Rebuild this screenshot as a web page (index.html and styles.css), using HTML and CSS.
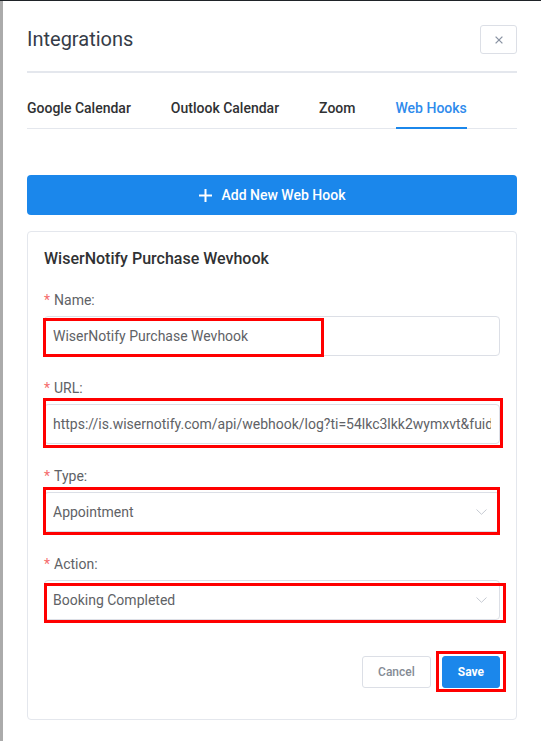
FILE: index.html
```html
<!DOCTYPE html>
<html lang="en">
<head>
<meta charset="utf-8">
<title>Integrations</title>
<link rel="stylesheet" href="styles.css">
</head>
<body>
<div class="topline"></div>
<div class="screen">
  <div class="backdrop"></div>
  <div class="drawer">
    <header class="drawer-header">
      <h1 class="title">Integrations</h1>
      <button class="close-btn" aria-label="Close">
        <svg width="8" height="8" viewBox="0 0 8 8"><path d="M0.6 0.6L7.4 7.4M7.4 0.6L0.6 7.4" stroke="#8a93a3" stroke-width="1.3" fill="none"/></svg>
      </button>
    </header>

    <nav class="tabs">
      <div class="tab">Google Calendar</div>
      <div class="tab">Outlook Calendar</div>
      <div class="tab">Zoom</div>
      <div class="tab active">Web Hooks</div>
    </nav>

    <button class="add-btn">
      <svg width="13" height="13" viewBox="0 0 13 13"><path d="M6.5 0V13M0 6.5H13" stroke="#fff" stroke-width="2" fill="none"/></svg>
      <span>Add New Web Hook</span>
    </button>

    <section class="card">
      <h2 class="card-title">WiserNotify Purchase Wevhook</h2>

      <div class="field field-first">
        <label class="label"><span class="req">*</span>Name:</label>
        <div class="control-wrap">
          <div class="control"><span class="value">WiserNotify Purchase Wevhook</span></div>
          <div class="mark mark-name"></div>
        </div>
      </div>

      <div class="field">
        <label class="label"><span class="req">*</span>URL:</label>
        <div class="control-wrap">
          <div class="control"><span class="value">https://is.wisernotify.com/api/webhook/log?ti=54lkc3lkk2wymxvt&amp;fuid=5f3a</span></div>
          <div class="mark mark-url"></div>
        </div>
      </div>

      <div class="field">
        <label class="label"><span class="req">*</span>Type:</label>
        <div class="control-wrap">
          <div class="control select"><span class="value">Appointment</span>
            <svg class="chev" width="11" height="6" viewBox="0 0 11 6"><path d="M0.5 0.5L5.5 5.3L10.5 0.5" stroke="#c6cad2" stroke-width="1" fill="none"/></svg>
          </div>
          <div class="mark mark-type"></div>
        </div>
      </div>

      <div class="field">
        <label class="label"><span class="req">*</span>Action:</label>
        <div class="control-wrap">
          <div class="control select"><span class="value">Booking Completed</span>
            <svg class="chev" width="11" height="6" viewBox="0 0 11 6"><path d="M0.5 0.5L5.5 5.3L10.5 0.5" stroke="#c6cad2" stroke-width="1" fill="none"/></svg>
          </div>
          <div class="mark mark-action"></div>
        </div>
      </div>

      <div class="actions">
        <button class="btn btn-cancel">Cancel</button>
        <div class="save-wrap">
          <button class="btn btn-save">Save</button>
          <div class="mark mark-save"></div>
        </div>
      </div>
    </section>
  </div>
</div>
</body>
</html>
```

FILE: styles.css
```css
* {
  box-sizing: border-box;
  margin: 0;
  padding: 0;
}

html, body {
  width: 541px;
  height: 741px;
  overflow: hidden;
}

body {
  font-family: Roboto, "Noto Sans", "Liberation Sans", sans-serif;
  background: #ffffff;
  color: #303133;
}

.topline {
  height: 1px;
  background: #1f2328;
}

.screen {
  display: flex;
  width: 541px;
  height: 740px;
}

.backdrop {
  flex: none;
  width: 3px;
  background: #ababab;
}

.drawer {
  flex: 1;
  min-width: 0;
  padding: 0 24px;
  background: #ffffff;
}

.drawer-header {
  display: flex;
  align-items: center;
  justify-content: space-between;
  padding: 24px 0 17px;
  border-bottom: 2px solid #e4e7ed;
}

.title {
  font-size: 20px;
  font-weight: 400;
  line-height: 29px;
  color: #363c48;
}

.close-btn {
  width: 37px;
  height: 29px;
  border: 1px solid #dcdfe6;
  border-radius: 3px;
  background: #ffffff;
  display: flex;
  align-items: center;
  justify-content: center;
}

.tabs {
  display: flex;
  margin-top: 15px;
  height: 41px;
  border-bottom: 1px solid #e4e7ed;
}

.tab {
  position: relative;
  padding: 0 20px;
  font-size: 14px;
  font-weight: 500;
  line-height: 40px;
  color: #303133;
}

.tab:first-child {
  padding-left: 0;
}

.tab:last-child {
  padding-right: 0;
}

.tab.active {
  color: #2f8bec;
}

.tab.active::after {
  content: "";
  position: absolute;
  left: 20px;
  right: 0;
  bottom: -1px;
  height: 2px;
  background: #1b87eb;
}

.add-btn {
  margin-top: 46px;
  width: 100%;
  height: 40px;
  border: none;
  border-radius: 4px;
  background: #1b87eb;
  color: #ffffff;
  font-family: inherit;
  font-size: 14px;
  font-weight: 500;
  display: flex;
  align-items: center;
  justify-content: center;
  gap: 10px;
}

.card {
  margin-top: 16px;
  border: 1px solid #e4e7ed;
  border-radius: 4px;
  padding: 16px 16px 31px;
}

.card-title {
  font-size: 16px;
  font-weight: 500;
  line-height: 22px;
  color: #303133;
}

.field {
  margin-top: 20px;
}

.field-first {
  margin-top: 18px;
}

.label {
  display: block;
  font-size: 14px;
  line-height: 24px;
  color: #606266;
  margin-bottom: 4px;
}

.req {
  color: #f56c6c;
  margin-right: 4px;
}

.control-wrap {
  position: relative;
}

.control {
  display: flex;
  align-items: center;
  height: 40px;
  border: 1px solid #dcdfe6;
  border-radius: 4px;
  padding: 0 8px;
  font-size: 14px;
  color: #606266;
  background: #ffffff;
}

.value {
  flex: 1;
  min-width: 0;
  overflow: hidden;
  white-space: nowrap;
}

.chev {
  margin-right: 4px;
  flex: none;
}

.mark {
  position: absolute;
  border: 3px solid #ff0000;
  pointer-events: none;
}

.mark-name {
  left: -1px;
  top: 2px;
  width: 281px;
  height: 39px;
}

.mark-url {
  left: -1px;
  top: -6px;
  width: 460px;
  height: 50px;
}

.mark-type {
  left: -1px;
  top: -5px;
  width: 457px;
  height: 48px;
}

.mark-action {
  left: 0;
  top: 3px;
  width: 462px;
  height: 40px;
}

.actions {
  display: flex;
  justify-content: flex-end;
  gap: 11px;
  margin-top: 36px;
}

.btn {
  height: 32px;
  padding: 0 15px;
  border-radius: 3px;
  font-family: inherit;
  font-size: 12px;
  font-weight: 500;
}

.btn-cancel {
  border: 1px solid #dcdfe6;
  background: #ffffff;
  color: #858b95;
}

.save-wrap {
  position: relative;
}

.btn-save {
  border: 1px solid #1b87eb;
  background: #1b87eb;
  color: #ffffff;
  font-weight: 700;
}

.mark-save {
  left: -6px;
  top: -5px;
  width: 70px;
  height: 41px;
}
```
